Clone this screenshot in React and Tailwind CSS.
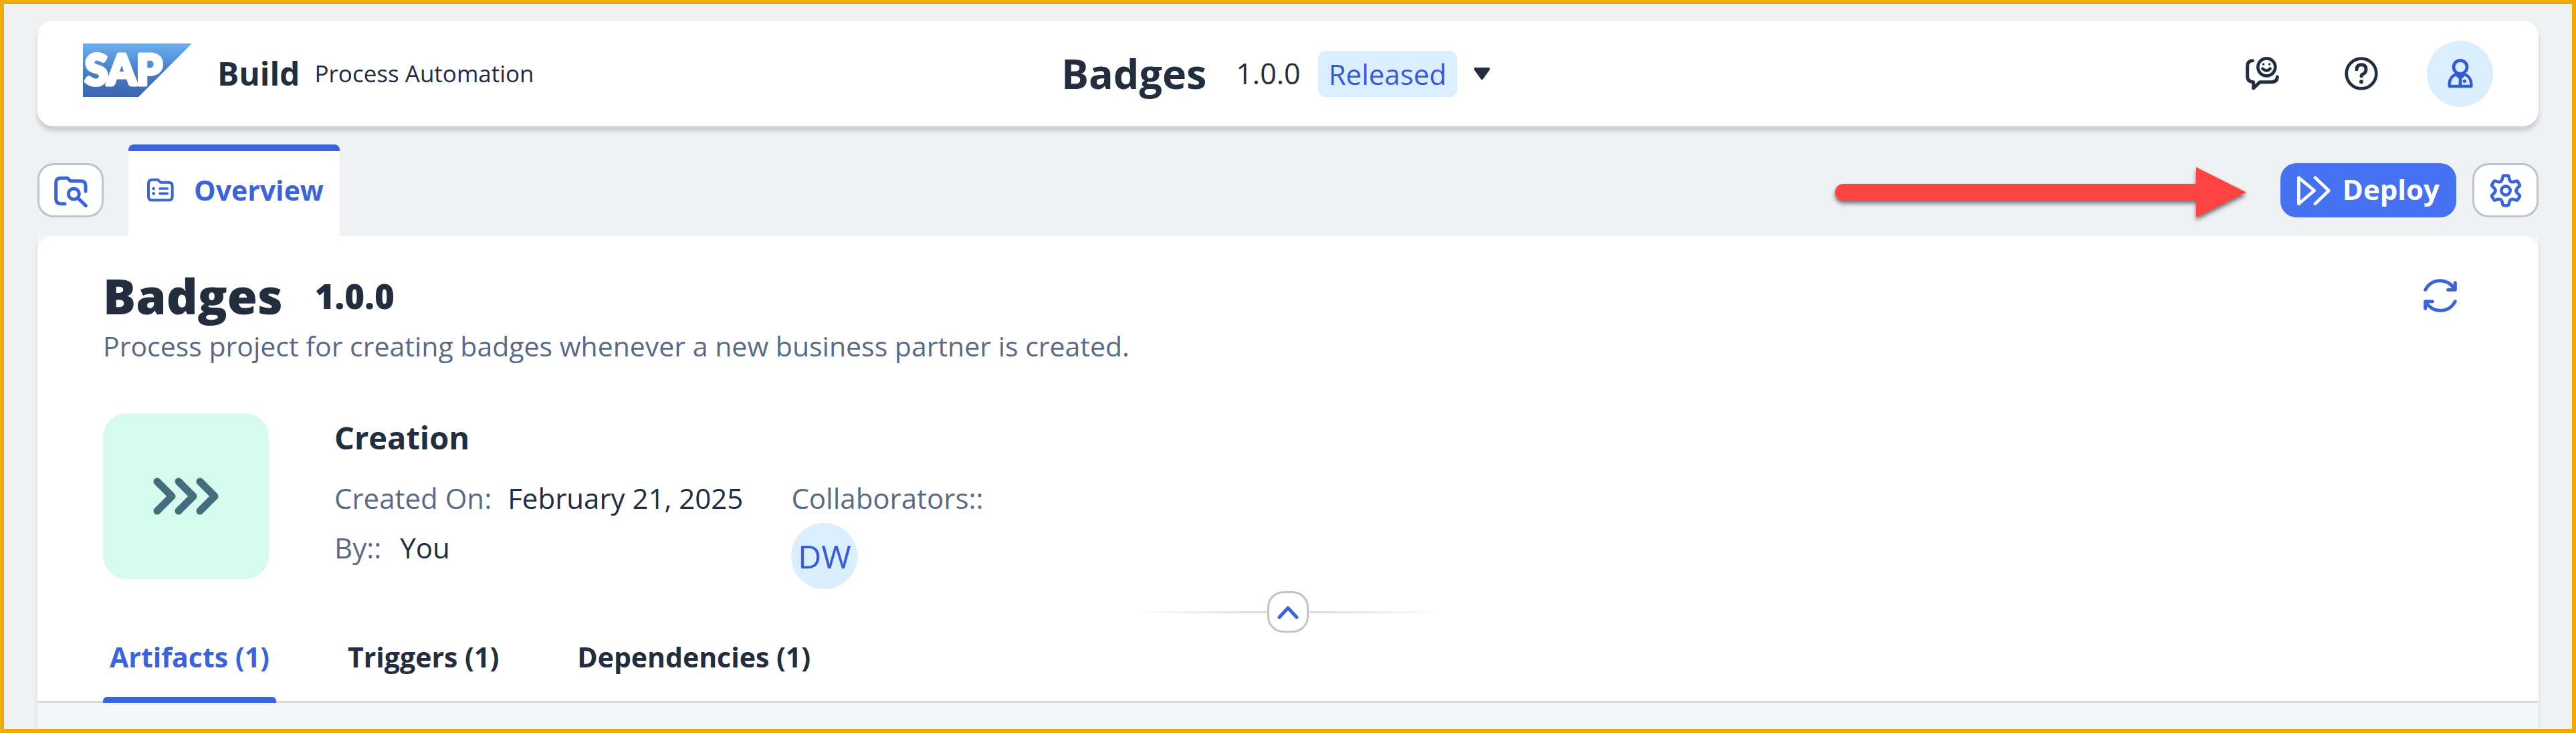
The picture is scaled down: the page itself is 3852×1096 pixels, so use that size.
import React, { useState } from "react";

function Icon({ className = "size-[50px]", children }) {
  return (
    <svg
      viewBox="0 0 150 150"
      className={className}
      fill="none"
      stroke="currentColor"
      strokeWidth="15"
      strokeLinecap="round"
      strokeLinejoin="round"
      aria-hidden="true"
    >
      {children}
    </svg>
  );
}

const FolderSearchIcon = () => (
  <Icon>
    <path d="M48 134H30Q8 134 8 112V40Q8 19 29 19H60L73 32H120Q141 32 141 52V78" />
    <circle cx="88" cy="90" r="24" />
    <path d="M108 110L142 143" />
  </Icon>
);

const FolderListIcon = () => (
  <svg viewBox="0 0 120 120" className="size-10" fill="none" stroke="currentColor" strokeWidth="12" strokeLinecap="round" strokeLinejoin="round" aria-hidden="true">
    <path d="M24 14H48L60 26H96Q113 26 113 43V89Q113 106 96 106H23Q6 106 6 89V32Q6 14 24 14Z" />
    <path d="M57 54H91M57 76H91" strokeWidth="11" />
    <path d="M29 54V54M29 76V76" strokeWidth="14" />
  </svg>
);

const FeedbackIcon = () => (
  <Icon>
    <path d="M31 17Q8 17 8 41V88Q8 112 35 113V141L64 113H114Q142 113 142 90" />
    <circle cx="94" cy="46" r="39" strokeWidth="14" />
    <path d="M80 33V33M107 33V33" strokeWidth="10" />
    <path d="M76 53Q94 70 110 53" strokeWidth="13" />
  </Icon>
);

const HelpIcon = () => (
  <Icon>
    <circle cx="75" cy="75" r="67" strokeWidth="14" />
    <path d="M54 56Q54 35 75 35Q96 35 96 56Q96 70 83 77Q75 81 75 86" />
    <path d="M75 112V112" strokeWidth="18" />
  </Icon>
);

const UserIcon = () => (
  <Icon>
    <circle cx="75" cy="46" r="30" strokeWidth="14" />
    <path d="M26 132V120Q28 90 52 80H98Q122 90 124 120V132Z" strokeWidth="13" />
    <path d="M57 78H93L91 90L81 97V132H69V97L59 90Z" fill="currentColor" strokeWidth="2" />
    <path d="M94 109V109" strokeWidth="16" />
  </Icon>
);

const DeployIcon = () => (
  <Icon>
    <path d="M7 17V134L77 75ZM81 17L142 75L81 134" strokeWidth="14" />
  </Icon>
);

const rotate = (x, y, degrees) => {
  const a = (degrees * Math.PI) / 180;
  const px = 75 + x * Math.cos(a) - y * Math.sin(a);
  const py = 75 + x * Math.sin(a) + y * Math.cos(a);
  return `${px.toFixed(1)} ${py.toFixed(1)}`;
};

// One tooth of the gear, repeated every 60 degrees.
const gearPath =
  `M${rotate(0, -46, -30)}` +
  [0, 60, 120, 180, 240, 300]
    .map(
      (d) =>
        `Q${rotate(-16, -46, d)} ${rotate(-14, -60, d)}` +
        `Q${rotate(-13, -67, d)} ${rotate(-8, -67, d)}` +
        `L${rotate(8, -67, d)}` +
        `Q${rotate(13, -67, d)} ${rotate(14, -60, d)}` +
        `Q${rotate(16, -46, d)} ${rotate(0, -46, d + 30)}`
    )
    .join("") +
  "Z";

const GearIcon = () => (
  <Icon>
    <path d={gearPath} strokeWidth="14" />
    <circle cx="75" cy="75" r="20" strokeWidth="14" />
  </Icon>
);

const RefreshIcon = () => (
  <Icon>
    <path d="M8 49Q30 8 75 8Q114 8 139 44M142 17V49H110M142 101Q120 142 75 142Q36 142 11 106M8 133V101H40" />
  </Icon>
);

const SapLogo = () => (
  <svg viewBox="0 0 163 80" className="mb-[10px] h-20 w-[163px]" role="img" aria-label="SAP">
    <defs>
      <linearGradient id="sap" x1="0" y1="0" x2="0" y2="1">
        <stop offset="0" stopColor="#6ab1f1" />
        <stop offset="0.5" stopColor="#4a7ec8" />
        <stop offset="1" stopColor="#3c64b1" />
      </linearGradient>
    </defs>
    <path d="M0 0H163L83 80H0Z" fill="url(#sap)" />
    <text x="3" y="62" fill="#fff" stroke="#fff" strokeWidth="5" strokeLinejoin="round" className="font-['Lato',sans-serif] text-[62px] font-black">
      SAP
    </text>
  </svg>
);

const outlineButton =
  "flex h-[81px] w-[99px] items-center justify-center rounded-3xl border-3 border-[#bec4cb] bg-white text-[#3c64d9]";

const tabs = ["Artifacts (1)", "Triggers (1)", "Dependencies (1)"];

function Header() {
  return (
    <header className="grid h-[158px] grid-cols-[1fr_auto_1fr] items-center rounded-3xl bg-white px-[68px] shadow-[0_7px_6px_#c8cdd1]">
      <a href="#home" className="flex items-center">
        <SapLogo />
        <span className="ml-[38px] text-[48px] font-bold">Build</span>
        <span className="ml-[22px] text-[35px]">Process Automation</span>
      </a>
      <div className="flex items-center">
        <span className="text-[61px] font-bold">Badges</span>
        <span className="ml-11 text-[43px]">1.0.0</span>
        <span className="ml-[26px] rounded-xl bg-[#dbeefe] px-4 text-[42px] leading-[69px] font-medium text-[#3659d4]">
          Released
        </span>
        <button type="button" aria-label="Select version" className="py-6 pr-9 pl-6">
          <svg viewBox="0 0 26 19" className="h-[19px] w-[26px]" aria-hidden="true">
            <path d="M3 2H23L13 16Z" fill="currentColor" stroke="currentColor" strokeWidth="4" strokeLinejoin="round" />
          </svg>
        </button>
      </div>
      <div className="flex items-center justify-end gap-[49px]">
        <button type="button" aria-label="Feedback" className="flex size-[99px] items-center justify-center">
          <FeedbackIcon />
        </button>
        <button type="button" aria-label="Help" className="flex size-[99px] items-center justify-center">
          <HelpIcon />
        </button>
        <button
          type="button"
          aria-label="Profile"
          className="flex size-[99px] items-center justify-center rounded-full bg-[#dbeefe] text-[#3659d4]"
        >
          <UserIcon />
        </button>
      </div>
    </header>
  );
}

function Toolbar() {
  return (
    <div className="mt-[27px] flex h-[137px] items-center">
      <button type="button" aria-label="Browse project" className={outlineButton}>
        <FolderSearchIcon />
      </button>
      <button
        type="button"
        className="ml-[37px] flex h-full items-center gap-[30px] rounded-t-lg border-t-10 border-[#3c64d9] bg-white pr-6 pb-3 pl-7 text-[41px] leading-[60px] font-bold text-[#3c64d9]"
      >
        <FolderListIcon />
        Overview
      </button>
      <svg
        viewBox="0 0 615 81"
        className="mr-[51px] ml-auto h-[81px] w-[615px] overflow-visible drop-shadow-[0_4px_3px_rgba(0,0,0,0.55)]"
        aria-hidden="true"
      >
        <path d="M12 31H540V6L615 43.500L540 81V56H12A12 12.500 0 0 1 12 31Z" fill="#ff4444" />
      </svg>
      <button
        type="button"
        className="flex h-[81px] items-center gap-[18px] rounded-3xl bg-[#4671f0] px-[25px] text-[42px] leading-[60px] font-bold text-white"
      >
        <DeployIcon />
        <span className="pb-1">Deploy</span>
      </button>
      <button type="button" aria-label="Settings" className={`${outlineButton} ml-6`}>
        <GearIcon />
      </button>
    </div>
  );
}

function ProjectInfo() {
  return (
    <div className="mt-[68px] flex items-start gap-[98px]">
      <div className="flex size-[248px] items-center justify-center rounded-[36px] bg-[#d7faee] text-[#426e7d]">
        <svg viewBox="0 0 98 56" className="h-14 w-[98px]" fill="none" stroke="currentColor" strokeWidth="11" strokeLinecap="round" strokeLinejoin="round" aria-hidden="true">
          <path d="M6 6L28 28L6 50M38 6L60 28L38 50M70 6L92 28L70 50" />
        </svg>
      </div>
      <section>
        <h2 className="mb-[18px] text-[47px] leading-[72px] font-bold">Creation</h2>
        <div className="flex items-start gap-[72px] text-[42px] leading-[74px]">
          <dl>
            <div className="flex gap-6">
              <dt className="text-[#5b6a84]">Created On:</dt>
              <dd>February 21, 2025</dd>
            </div>
            <div className="flex gap-7">
              <dt className="text-[#5b6a84]">By::</dt>
              <dd>You</dd>
            </div>
          </dl>
          <div>
            <div className="text-[#5b6a84]">Collaborators::</div>
            <div className="flex size-[99px] items-center justify-center rounded-full bg-[#dbeefe] text-[48px] text-[#3659d4]">
              DW
            </div>
          </div>
        </div>
      </section>
    </div>
  );
}

export default function App() {
  const [active, setActive] = useState(tabs[0]);

  return (
    <div className="flex min-h-screen flex-col overflow-hidden border-6 border-[#f0ab00] bg-[#eff1f3] px-[50px] pt-[25px] font-['Open_Sans',sans-serif] text-[#222d3e]">
      <Header />
      <Toolbar />
      <main className="flex flex-1 flex-col bg-[#f5f6f8] shadow-[0_6px_6px_#d9dcdf]">
        <div className="rounded-t-3xl bg-white pt-[47px]">
          <div className="px-[98px]">
            <div className="flex h-[84px] items-center">
              <h1 className="text-[73px] font-extrabold">Badges</h1>
              <span className="ml-12 text-[51px] font-extrabold">1.0.0</span>
              <button type="button" aria-label="Refresh" className="ml-auto flex h-[81px] w-[99px] items-center justify-center text-[#3c64d9]">
                <RefreshIcon />
              </button>
            </div>
            <p className="text-[41px] leading-[66px] text-[#5b6a84]">
              Process project for creating badges whenever a new business partner is created.
            </p>
            <ProjectInfo />
          </div>
          <div className="mt-[3px] flex items-center justify-center">
            <div className="h-[3px] w-[200px] bg-linear-to-l from-[#d9d9d9] to-white" />
            <button
              type="button"
              aria-label="Collapse header"
              className="flex size-[62px] items-center justify-center rounded-3xl border-3 border-[#bec4cb] bg-white text-[#3c64d9]"
            >
              <svg viewBox="0 0 32 21" className="h-[21px] w-8" fill="none" stroke="currentColor" strokeWidth="5" strokeLinecap="round" strokeLinejoin="round" aria-hidden="true">
                <path d="M3 18L16 4L29 18" />
              </svg>
            </button>
            <div className="h-[3px] w-[200px] bg-linear-to-r from-[#d9d9d9] to-white" />
          </div>
          <nav className="flex gap-[97px] border-b-3 border-[#d9d9d9] px-[98px]">
            {tabs.map((label) => (
              <button
                key={label}
                type="button"
                aria-current={label === active}
                onClick={() => setActive(label)}
                className="group -mb-[3px] px-[10px] pt-[6px] text-[41px] leading-[60px] font-bold aria-[current=true]:text-[#3c64d9]"
              >
                {label}
                <span className="-mx-[10px] mt-[30px] block h-[9px] rounded-t-md group-aria-[current=true]:bg-[#3c64d9]" />
              </button>
            ))}
          </nav>
        </div>
      </main>
    </div>
  );
}
